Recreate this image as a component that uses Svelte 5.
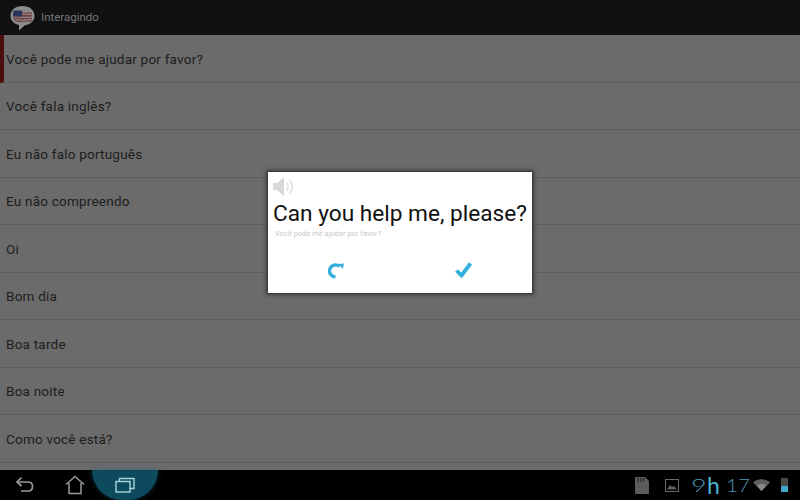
<script>
  const phrases = [
    'Você pode me ajudar por favor?',
    'Você fala inglês?',
    'Eu não falo português',
    'Eu não compreendo',
    'Oi',
    'Bom dia',
    'Boa tarde',
    'Boa noite',
    'Como você está?'
  ];
</script>

<div class="screen">
  <header class="action">
    <svg class="logo" width="27" height="26" viewBox="0 0 27 26">
      <path d="M13.500 1C6.500 1 1.500 5 1.500 11c0 4.500 3.500 8 8.500 9l0 5.500 6-5.200c5.500-.8 9.500-4.500 9.500-9.300C25.500 5 20.500 1 13.500 1z" fill="#8c8c8c"/>
      <path d="M4 7.500h19v8.500c-3 1.500-6 .5-9 .8-4 .4-7 .2-9-1.500z" fill="#6e3f45"/>
      <path d="M4 9.500c6-.8 13-.3 19.500 0M5 12c6 .3 13 .5 18.500 0M6 14.500c5 .8 12 .8 16.500 0" stroke="#9c9496" stroke-width="1" fill="none"/>
      <path d="M4.500 5.500h8.500v6H4z" fill="#2a3459"/>
    </svg>
    <span class="title">Interagindo</span>
  </header>

  <ul class="list">
    {#each phrases as phrase, i}
      <li class:selected={i === 0}>{phrase}</li>
    {/each}
  </ul>

  <nav class="system">
    <div class="keys">
      <svg class="key back" width="20" height="20" viewBox="0 0 20 20" fill="none" stroke="#999" stroke-width="1.700">
        <path d="M2 7h11c3 0 4.500 2.200 4.500 4.500S16 16 13 16H6"/>
        <path d="M6.500 2.500 2 7l4.500 4" />
      </svg>
      <svg class="key home" width="20" height="20" viewBox="0 0 20 20" fill="none" stroke="#999" stroke-width="1.500">
        <path d="M1 9.500 10 1.500l9 8"/>
        <path d="M4 8v10.500h12V8"/>
      </svg>
      <div class="recent">
        <svg width="20" height="16" viewBox="0 0 20 16" fill="none" stroke="#a9d4de" stroke-width="1.400">
          <rect x="1" y="4.500" width="14" height="10.500"/>
          <path d="M4.500 4.500V1.500h14.500v10H15"/>
        </svg>
      </div>
    </div>
    <div class="status">
      <svg width="14" height="17" viewBox="0 0 14 17"><path d="M0 0h10l4 4v13H0z" fill="#5b5b5b"/><path d="M3 1v4M6 1v4M8.500 1v4" stroke="#222" stroke-width="1"/></svg>
      <svg class="pic" width="14" height="13" viewBox="0 0 14 13" fill="none"><rect x=".5" y=".5" width="13" height="12" stroke="#6a6a6a"/><path d="M2 10.500 5 6l2 2 2-1 3 3.500z" fill="#5f5f5f"/></svg>
      <div class="clock"><span class="nine">9</span><b>h</b><span class="minutes">17</span></div>
      <svg class="wifi" width="17" height="12" viewBox="0 0 17 12"><path d="M0 3.500C4.500-.8 12.500-.8 17 3.500L8.500 12z" fill="#5f5f5f"/><path d="M3.800 6.500c3-2 6.400-2 9.400 0L8.500 12z" fill="#8a8a8a"/></svg>
      <div class="battery"><i></i></div>
    </div>
  </nav>

  <div class="dialog">
    <svg class="speaker" width="22" height="19" viewBox="0 0 22 19">
      <path d="M0 6h4l7-6v19l-7-6H0z" fill="#d8d8d8"/>
      <path d="M13.500 5.500c2 2.300 2 5.700 0 8M16.500 2.500c3.700 4 3.700 10 0 14" fill="none" stroke="#e2e2e2" stroke-width="1.800"/>
    </svg>
    <div class="question">Can you help me, please?</div>
    <div class="translation">Você pode me ajudar por favor?</div>
    <div class="actions">
      <svg width="17" height="17" viewBox="0 0 17 17" fill="none">
        <path d="M11.500 4.400A6 6 0 1 0 7.500 14.900" stroke="#33aede" stroke-width="3.300"/>
        <path d="M10.500 2 15.800 1.500 15 7z" fill="#33aede"/>
      </svg>
      <svg width="17" height="16" viewBox="0 0 17 16" fill="none">
        <path d="M1.500 8.500 6.500 13.500 15.500 1.500" stroke="#33aede" stroke-width="3.800"/>
      </svg>
    </div>
  </div>
</div>

<style>
  :global(body) {
    margin: 0;
  }
  .screen {
    position: relative;
    width: 800px;
    height: 500px;
    display: flex;
    flex-direction: column;
    overflow: hidden;
    background: #6b6b6b;
    font-family: Roboto, "Liberation Sans", sans-serif;
  }
  .action {
    height: 34px;
    flex: none;
    display: flex;
    align-items: center;
    background: #111;
    border-bottom: 1px solid #0b0b0b;
  }
  .logo {
    margin-left: 9px;
    margin-top: 1px;
  }
  .title {
    margin-left: 5px;
    color: #777;
    font-size: 11.500px;
  }
  .list {
    list-style: none;
    margin: 0;
    padding: 0;
    flex: 1;
    overflow: hidden;
    background: #6b6b6b;
  }
  .list li {
    box-sizing: border-box;
    height: 47.500px;
    border-bottom: 1px solid #5c5c5c;
    padding: 1px 0 0 6px;
    display: flex;
    align-items: center;
    color: #1d1d1d;
    font-size: 13.500px;
    letter-spacing: 0.22px;
  }
  .list li.selected {
    border-left: 4px solid #4a0e0e;
    padding-left: 2px;
  }
  .system {
    height: 30px;
    flex: none;
    background: #000;
    display: flex;
    justify-content: space-between;
  }
  .keys {
    display: flex;
    align-items: center;
  }
  .key {
    flex: none;
  }
  .back {
    margin-left: 15px;
  }
  .home {
    margin-left: 30px;
  }
  .recent {
    margin-left: 7px;
    width: 66px;
    height: 30px;
    display: flex;
    align-items: center;
    justify-content: center;
    background: #0d4a5d;
    border-radius: 0 0 33px 33px;
    box-shadow: 0 0 5px rgba(20, 100, 125, 0.5);
  }
  .status {
    display: flex;
    align-items: center;
    padding-right: 12px;
  }
  .pic {
    margin-left: 16px;
  }
  .clock {
    margin-left: 12px;
    width: 58px;
    height: 30px;
    display: flex;
    align-items: center;
    color: #4a97b3;
    font-family: Lato, Roboto, sans-serif;
    font-weight: 300;
    font-size: 18px;
    line-height: 30px;
    white-space: nowrap;
  }
  .nine {
    display: inline-block;
    width: 14px;
    transform: scaleX(1.500);
    transform-origin: left center;
  }
  .clock b {
    margin-left: 2px;
    width: 19px;
    color: #4fb4d8;
    font-weight: 400;
    font-size: 23px;
    display: inline-block;
    transform-origin: left center;
  }
  .minutes {
    display: inline-block;
    transform: scaleX(1.150);
    transform-origin: left center;
  }
  .wifi {
    margin-left: 4px;
  }
  .battery {
    margin-left: 11px;
    width: 7px;
    height: 14px;
    background: #4a4a4a;
    display: flex;
    align-items: flex-end;
  }
  .battery i {
    display: block;
    width: 100%;
    height: 6px;
    background: #3fa6cc;
  }
  .dialog {
    position: absolute;
    left: 268px;
    top: 172px;
    width: 264px;
    height: 121px;
    background: #fff;
    box-shadow: 0 0 0 1px #3a3a3a, 0 0 4px 2px rgba(30, 30, 30, 0.6);
  }
  .speaker {
    display: block;
    margin: 5px 0 0 5px;
  }
  .question {
    margin-top: 4px;
    text-align: center;
    color: #111;
    font-size: 22.650px;
    line-height: 27px;
    white-space: nowrap;
  }
  .translation {
    margin: 2px 0 0 7px;
    color: #c8c8c8;
    font-size: 7.300px;
    line-height: 9px;
    letter-spacing: 0.1px;
  }
  .actions {
    margin-top: 24px;
    display: grid;
    grid-template-columns: 140px 1fr;
  }
  .actions svg:first-child {
    margin-left: 60px;
  }
  .actions svg:last-child {
    margin-left: 47px;
  }
</style>
